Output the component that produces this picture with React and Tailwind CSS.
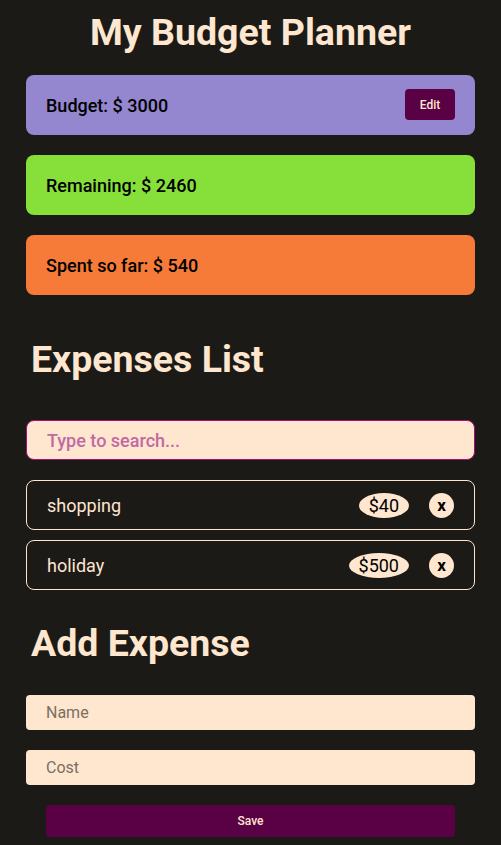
import React from 'react';

const expenses = [
  { id: 1, name: 'shopping', cost: 40 },
  { id: 2, name: 'holiday', cost: 500 },
];

export default function App() {
  return (
    <div
      className="min-h-screen bg-[#1c1a17] px-[26px] pb-8"
      style={{ fontFamily: 'Roboto, "Liberation Sans", sans-serif' }}
    >
      <h1 className="pt-[11px] text-center text-[37.5px] font-bold leading-[42px] text-[#fee6cf]">
        My Budget Planner
      </h1>

      <div className="mt-[22px] flex flex-col gap-5">
        <div className="flex h-[60px] items-center justify-between rounded-lg bg-[#9486cf] pl-5 pr-5">
          <span className="text-[18px] font-medium text-black">Budget: $ 3000</span>
          <button className="-mt-px h-[31px] w-[50px] rounded bg-[#5a0044] text-[12px] font-medium text-[#fee6cf]">
            Edit
          </button>
        </div>
        <div className="flex h-[60px] items-center rounded-lg bg-[#86e039] px-5">
          <span className="text-[18px] font-medium text-black">Remaining: $ 2460</span>
        </div>
        <div className="flex h-[60px] items-center rounded-lg bg-[#f67a38] px-5">
          <span className="text-[18px] font-medium text-black">Spent so far: $ 540</span>
        </div>
      </div>

      <h2 className="mt-[43px] pl-[5px] text-[37.5px] font-bold leading-[42px] text-[#fee6cf]">
        Expenses List
      </h2>

      <input
        type="text"
        placeholder="Type to search..."
        className="mt-[40px] block h-[40px] w-full rounded-lg border border-[#a3107c] bg-[#fee6cf] px-5 text-[18px] font-medium text-black outline-none placeholder:text-[#c16aa2]"
      />

      <ul className="mt-5 flex flex-col gap-[10px]">
        {expenses.map((e) => (
          <li
            key={e.id}
            className="flex h-[50px] items-center justify-between rounded-lg border border-[#fee6cf] pl-5 pr-5"
          >
            <span className="text-[18px] text-[#fee6cf]">{e.name}</span>
            <div className="flex items-center gap-5">
              <span className="flex h-[25px] items-center rounded-[50%] bg-[#fee6cf] px-[10px] text-[18px] text-black">
                ${e.cost}
              </span>
              <button className="flex h-[25px] w-[25px] items-center justify-center rounded-full bg-[#fee6cf] text-[17px] font-bold leading-none text-black">
                x
              </button>
            </div>
          </li>
        ))}
      </ul>

      <h2 className="mt-[32px] pl-[5px] text-[37.5px] font-bold leading-[42px] text-[#fee6cf]">
        Add Expense
      </h2>

      <div className="mt-[31px] flex flex-col gap-5">
        <input
          type="text"
          placeholder="Name"
          className="block h-[35px] w-full rounded bg-[#fee6cf] px-5 text-[16px] text-black outline-none placeholder:text-[#7d6e61]"
        />
        <input
          type="text"
          placeholder="Cost"
          className="block h-[35px] w-full rounded bg-[#fee6cf] px-5 text-[16px] text-black outline-none placeholder:text-[#7d6e61]"
        />
        <div className="px-5">
          <button className="h-[32px] w-full rounded bg-[#5a0044] text-[12px] font-medium text-[#fee6cf]">
            Save
          </button>
        </div>
      </div>
    </div>
  );
}
